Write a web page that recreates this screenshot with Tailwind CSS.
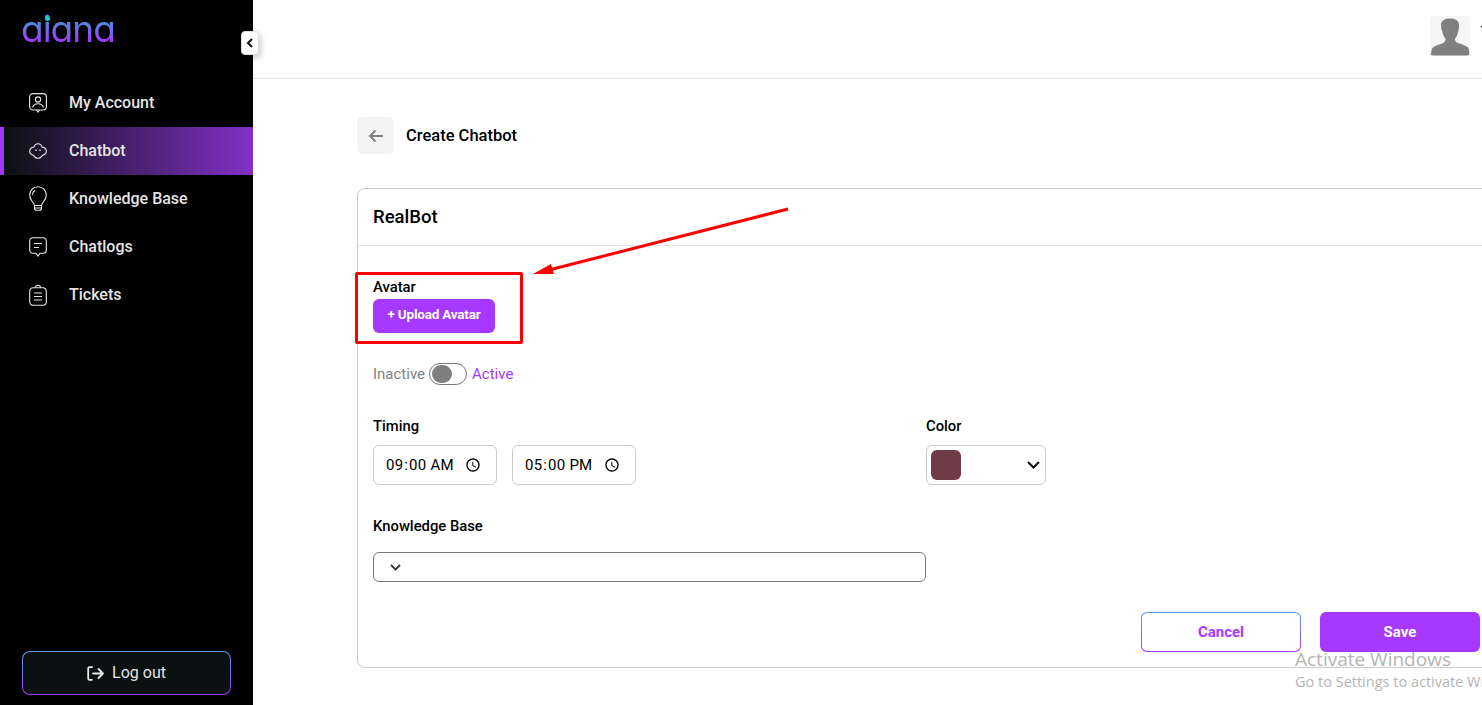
<!DOCTYPE html>
<html lang="en">
<head>
  <meta charset="UTF-8" />
  <meta name="viewport" content="width=device-width, initial-scale=1.0"/>
  <title>Create Chatbot | Aiana</title>
  <script src="https://cdn.jsdelivr.net/npm/@tailwindcss/browser@4"></script>
</head>
<body class="bg-white text-black font-['Roboto',sans-serif] h-[705px] overflow-hidden">
<div class="relative flex h-[705px] w-[1482px] overflow-hidden">

  <!-- Sidebar -->
  <aside class="relative flex flex-col w-[253px] shrink-0 bg-black text-[#e4e4e4]">
    <div class="h-[79px] pl-[21px] pt-[4px]">
      <div class="relative w-fit">
        <span class="block text-[37px] leading-[50px] font-['Inter',sans-serif] font-normal [font-feature-settings:'cv11'] tracking-[-1px] text-transparent bg-clip-text bg-[linear-gradient(180deg,#4f8ee0_35%,#a238ff_75%)]">aiana</span>
        <span class="absolute left-[24px] top-[12px] w-[5px] h-[5px] rounded-full bg-[#12d0c8]"></span>
      </div>
    </div>

    <nav class="flex flex-col">
      <a class="flex items-center h-[48px] pl-[29px] gap-[22px] text-base font-medium">
        <svg class="w-[18px] h-[20px] shrink-0" viewBox="0 0 18 20" fill="none" stroke="#e8e8e8" stroke-width="1.1"><rect x="0.6" y="0.6" width="16.8" height="16.4" rx="3.5"/><circle cx="9" cy="6.5" r="2.6"/><path d="M3.5 14.5c1-3 3-3.8 5.500-3.800s4.500.8 5.500 3.800M7.500 17l1.500 2 1.500-2"/></svg>
        <span>My Account</span>
      </a>
      <a class="flex items-center h-[48px] pl-[25px] gap-[22px] text-base font-medium border-l-4 border-[#a238ff] bg-[linear-gradient(90deg,#0b1011,#8230c6)]">
        <svg class="w-[18px] h-[16px] shrink-0" viewBox="0 0 18 16" fill="none" stroke="#e8e8e8" stroke-width="1.1"><path d="M5 4C5.500 2 7 .7 9 .7S12.500 2 13 4c2.300.4 4.300 2 4.300 4.300S15.300 12 13.300 12.500c-.8 1.800-2.300 2.800-4.300 2.800s-3.500-1-4.300-2.800C2.700 12 .7 10.500.7 8.300S2.700 4.400 5 4z"/><path d="M6.300 6.500l1.400 1.400M7.700 6.500L6.300 7.900M10.300 6.500l1.400 1.400M11.700 6.500l-1.400 1.400" stroke-width="0.8"/></svg>
        <span>Chatbot</span>
      </a>
      <a class="flex items-center h-[48px] pl-[29px] gap-[22px] text-base font-medium">
        <svg class="w-[18px] h-[26px] shrink-0" viewBox="0 0 18 26" fill="none" stroke="#e8e8e8" stroke-width="1.1"><path d="M5.500 19.500C4.800 16 .7 14.500.7 9.200.7 4.300 4.500.7 9 .7s8.300 3.600 8.300 8.500c0 5.300-4.100 6.800-4.800 10.300z"/><path d="M5.500 19.500v2.800c0 1 1 2 2 2h3c1 0 2-1 2-2v-2.800M5.500 22h7M3.500 9c0-2 1-3.800 2.500-4.800"/></svg>
        <span>Knowledge Base</span>
      </a>
      <a class="flex items-center h-[48px] pl-[29px] gap-[22px] text-base font-medium">
        <svg class="w-[18px] h-[20px] shrink-0" viewBox="0 0 18 20" fill="none" stroke="#e8e8e8" stroke-width="1.1"><path d="M4 .7h10c2 0 3.300 1.300 3.300 3.300v9c0 2-1.300 3.300-3.300 3.300h-3L9 19l-2-2.700H4C2 16.300.7 15 .7 13V4C.7 2 2 .7 4 .7z"/><path d="M5 6.500h8M5 10.500h5"/></svg>
        <span>Chatlogs</span>
      </a>
      <a class="flex items-center h-[48px] pl-[29px] gap-[22px] text-base font-medium">
        <svg class="w-[18px] h-[22px] shrink-0" viewBox="0 0 18 22" fill="none" stroke="#e8e8e8" stroke-width="1.1"><rect x="0.7" y="3.700" width="16.600" height="17.600" rx="3.500"/><path d="M6.500 3.700a2.500 2.500 0 0 1 5 0M5 9h8M5 12.500h8M5 16h8"/></svg>
        <span>Tickets</span>
      </a>
    </nav>

    <div class="mt-auto mb-[10px] mx-[22px] p-px rounded-lg bg-[linear-gradient(180deg,#5b9bea,#a238ff)]">
      <button class="flex items-center justify-center gap-[8px] w-full h-[42px] rounded-[7px] bg-[#0b1011] text-base text-[#e4e4e4]">
        <svg class="w-[17px] h-[15px]" viewBox="0 0 17 15" fill="none" stroke="#e8e8e8" stroke-width="1.800" stroke-linecap="round" stroke-linejoin="round"><path d="M5 1.200H2.500c-.8 0-1.300.5-1.300 1.300v10c0 .8.500 1.300 1.300 1.300H5M6 7.500h10M11.500 3l4.500 4.500-4.500 4.500"/></svg>
        <span>Log out</span>
      </button>
    </div>

    <button class="absolute left-[241px] top-[31px] flex items-center justify-center w-[18px] h-[24px] rounded bg-white border border-[#ddd] shadow-[2px_3px_6px_rgba(0,0,0,0.2)]">
      <svg class="w-[8px] h-[10px]" viewBox="0 0 8 10" fill="none" stroke="#111" stroke-width="2"><path d="M6 1L2 5l4 4"/></svg>
    </button>
  </aside>

  <!-- Main -->
  <main class="flex-1 min-w-0 flex flex-col">
    <header class="flex items-start justify-end h-[79px] shrink-0 border-b border-[#e2e2e2] pt-[16px]">
      <div class="w-[40px] h-[40px] shrink-0 bg-[#f5f5f5] rounded-sm overflow-hidden">
        <svg class="w-[40px] h-[40px]" viewBox="0 0 40 40" fill="#808080"><path d="M11 9c0-5 4.500-6.500 9-6.500S29 4 29 9c0 3-.3 5-.8 6.500-.5 3-1.700 5.500-3.200 7 0 2 .5 3.500 3 4.500 3 1.200 7 2 9.500 4 1 .8 1.800 3 2 8.500H1c.2-5 .8-7 2-8 2.500-2 6.500-3 9.500-4.200 2.500-1 3-2.800 3-4.800-1.500-1.500-2.700-4-3.200-7C11.500 14 11 11.500 11 9z"/></svg>
      </div>
      <svg class="w-[8px] h-[6px] ml-[10px] mr-[-6px] mt-[9px] shrink-0" viewBox="0 0 8 6" fill="none" stroke="#333" stroke-width="1.500"><path d="M1 1l3 3 3-3"/></svg>
    </header>

    <div class="pl-[104px] pt-[38px] w-[1243px]">
      <div class="flex items-center gap-[12px] h-[37px]">
        <button class="flex items-center justify-center w-[37px] h-[37px] rounded-md bg-[#f3f3f3]">
          <svg class="w-[16px] h-[14px]" viewBox="0 0 16 14" fill="none" stroke="#808080" stroke-width="2"><path d="M15 7H2M7.500 1.500L2 7l5.500 5.500"/></svg>
        </button>
        <h1 class="pt-[2px] text-[16.5px] font-medium">Create Chatbot</h1>
      </div>

      <!-- Card -->
      <section class="mt-[34px] h-[480px] border border-[#cccccc] rounded-lg">
        <div class="flex items-center h-[57px] pt-[2px] px-[15px] border-b border-[#e5e5e5]">
          <h2 class="text-[18.500px] font-medium">RealBot</h2>
        </div>

        <div class="px-[15px] pt-[33px]">
          <div class="text-[14.800px] font-medium leading-[16px]">Avatar</div>
          <button class="mt-[4px] block w-[122px] h-[34px] pb-[4px] rounded-md bg-[#a738ff] text-white text-[13.500px] tracking-[-0.2px] font-bold">+ Upload Avatar</button>

          <div class="flex items-center gap-[4px] mt-[30px] h-[22px] text-[15px]">
            <span class="text-[#7f7f7f]">Inactive</span>
            <span class="flex items-center w-[38px] h-[22px] rounded-full border border-[#777] pl-[2px]">
              <span class="w-[20px] h-[18px] rounded-full bg-[#7f7f7f]"></span>
            </span>
            <span class="ml-[1px] text-[#a738ff]">Active</span>
          </div>

          <div class="flex mt-[31px]">
            <div class="w-[553px]">
              <div class="text-[14.800px] font-medium leading-[20px]">Timing</div>
              <div class="flex gap-[15px] mt-[9px]">
                <input type="time" value="09:00" class="w-[124px] h-[40px] pl-[11px] pr-[12px] border border-[#cccccc] rounded-md text-[15px] tracking-[0.2px] font-['Roboto',sans-serif]" />
                <input type="time" value="17:00" class="w-[124px] h-[40px] pl-[11px] pr-[12px] border border-[#cccccc] rounded-md text-[15px] tracking-[0.2px] font-['Roboto',sans-serif]" />
              </div>
            </div>
            <div>
              <div class="text-[14.800px] font-medium leading-[20px]">Color</div>
              <div class="flex items-center justify-between mt-[9px] w-[120px] h-[40px] px-[4px] border border-[#cccccc] rounded-md">
                <span class="w-[30px] h-[30px] rounded-md bg-[#6f3b47]"></span>
                <svg class="w-[13px] h-[8px] mr-[1px]" viewBox="0 0 13 8" fill="none" stroke="#111" stroke-width="2"><path d="M1 1l5.500 5.500L12 1"/></svg>
              </div>
            </div>
          </div>

          <div class="mt-[31px] text-[14.800px] font-medium leading-[20px]">Knowledge Base</div>
          <div class="flex items-center mt-[16px] w-[553px] h-[30px] px-[16px] border border-[#777] rounded-md">
            <svg class="w-[11px] h-[7px]" viewBox="0 0 11 7" fill="none" stroke="#333" stroke-width="1.800"><path d="M1 1l4.500 4.500L10 1"/></svg>
          </div>

          <div class="flex justify-end gap-[19px] mt-[30px] w-[1107px]">
            <div class="w-[160px] h-[40px] p-px rounded-md bg-[linear-gradient(180deg,#5b9bea,#a238ff)]">
              <button class="w-full h-full rounded-[5px] bg-white text-[#a738ff] text-[15px] font-bold">Cancel</button>
            </div>
            <button class="w-[160px] h-[40px] rounded-md bg-[#a738ff] text-white text-[15px] font-bold">Save</button>
          </div>
        </div>
      </section>
    </div>
  </main>

  <!-- Annotation -->
  <div class="absolute left-[355px] top-[272px] w-[168px] h-[72px] border-[3px] border-[#ff0000] rounded-[2px]"></div>
  <svg class="absolute left-[525px] top-[200px] w-[270px] h-[80px]" viewBox="0 0 270 80" fill="none">
    <path d="M263 9L20 71" stroke="#ff0000" stroke-width="3"/>
    <path d="M8 74l18-10 3 10z" fill="#ff0000"/>
  </svg>

  <!-- Windows watermark -->
  <div class="absolute left-[1295px] top-[648px] whitespace-nowrap font-['Open_Sans',sans-serif] text-[#b5b5b5]">
    <div class="text-[19px] leading-[22px]">Activate Windows</div>
    <div class="mt-[3px] text-[14.500px] leading-[18px]">Go to Settings to activate Windows.</div>
  </div>
</div>
</body>
</html>
